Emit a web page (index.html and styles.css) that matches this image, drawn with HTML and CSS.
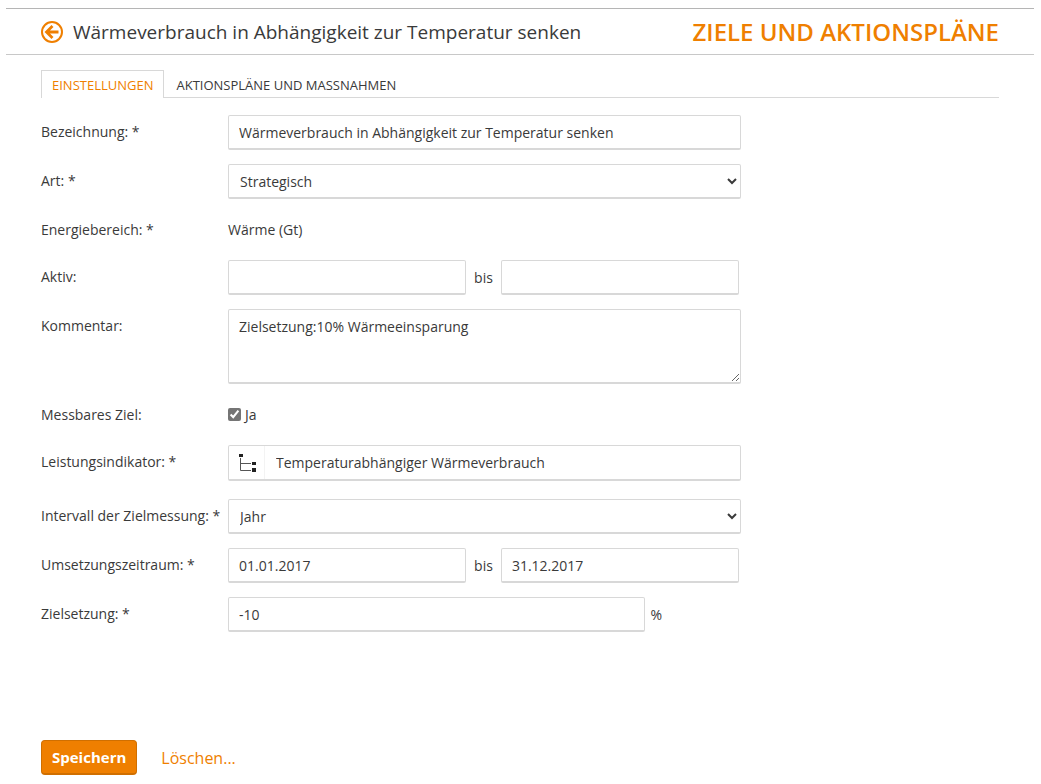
FILE: index.html
```html
<!DOCTYPE html>
<html lang="de">
<head>
<meta charset="utf-8">
<title>Ziele und Aktionspläne</title>
<link rel="stylesheet" href="styles.css">
</head>
<body>
<header class="page-header">
  <a class="back" href="#" aria-label="Zurück">
    <svg class="back-icon" viewBox="0 0 22 22" fill="none" stroke="currentColor">
      <circle cx="11" cy="11" r="10" stroke-width="2"/>
      <path d="M17.500 11H6M11.500 5L5.500 11l6 6" stroke-width="2.800"/>
    </svg>
  </a>
  <h1 class="title">Wärmeverbrauch in Abhängigkeit zur Temperatur senken</h1>
  <p class="section-name">ZIELE UND AKTIONSPLÄNE</p>
</header>
<main class="content">
  <nav class="tabs">
    <a class="tab tab-active" href="#" aria-current="page">EINSTELLUNGEN</a>
    <a class="tab" href="#">AKTIONSPLÄNE UND MASSNAHMEN</a>
  </nav>
  <form class="form">
    <label class="label" for="name">Bezeichnung: *</label>
    <input class="field" id="name" type="text" value="Wärmeverbrauch in Abhängigkeit zur Temperatur senken">

    <label class="label" for="kind">Art: *</label>
    <select class="field select" id="kind"><option>Strategisch</option></select>

    <span class="label">Energiebereich: *</span>
    <span class="static">Wärme (Gt)</span>

    <label class="label" for="active-from">Aktiv:</label>
    <div class="range">
      <input class="field" id="active-from" type="text">
      <label for="active-to">bis</label>
      <input class="field" id="active-to" type="text">
    </div>

    <label class="label" for="comment">Kommentar:</label>
    <textarea class="field comment" id="comment">Zielsetzung:10% Wärmeeinsparung</textarea>

    <span class="label">Messbares Ziel:</span>
    <div class="static check">
      <input class="checkbox" id="measurable" type="checkbox" checked>
      <label for="measurable">Ja</label>
    </div>

    <label class="label" for="indicator">Leistungsindikator: *</label>
    <div class="field picker">
      <button class="picker-button" type="button" aria-label="Indikator wählen">
        <svg class="tree-icon" viewBox="0 0 18 18">
          <path d="M2.500 4v12.500H13M2.500 9.500H13" fill="none" stroke="#555" stroke-width="1"/>
          <path d="M1 0h4v3H1zM14 8h4v3h-4zM14 14h4v4h-4z" fill="#222"/>
        </svg>
      </button>
      <input class="picker-input" id="indicator" type="text" value="Temperaturabhängiger Wärmeverbrauch">
    </div>

    <label class="label" for="interval">Intervall der Zielmessung: *</label>
    <select class="field select" id="interval"><option>Jahr</option></select>

    <label class="label" for="period-from">Umsetzungszeitraum: *</label>
    <div class="range">
      <input class="field" id="period-from" type="text" value="01.01.2017">
      <label for="period-to">bis</label>
      <input class="field" id="period-to" type="text" value="31.12.2017">
    </div>

    <label class="label" for="target">Zielsetzung: *</label>
    <div class="target">
      <input class="field" id="target" type="text" value="-10">
      <span>%</span>
    </div>

    <div class="actions">
      <button class="save" type="submit">Speichern</button>
      <a class="delete" href="#">Löschen...</a>
    </div>
  </form>
</main>
</body>
</html>
```
FILE: styles.css
```css
* { box-sizing: border-box; }

body {
  margin: 8px 7px 0 6px;
  background: #fff;
  color: #3a3a3a;
  font: 14px/20px "Open Sans", sans-serif;
}

a { color: #ef7f00; text-decoration: none; }

.page-header {
  display: flex;
  align-items: center;
  height: 47px;
  padding: 0 35px;
  border-top: 1px solid #b5b5b5;
  border-bottom: 1px solid #c8c8c8;
}

.back { display: flex; margin-right: 10px; }
.back-icon { width: 22px; height: 22px; }

.title { margin: 0; font-size: 19px; line-height: 28px; font-weight: 400; }

.section-name {
  margin: 0 0 0 auto;
  color: #ef7f00;
  font: 600 24px/32px "Open Sans", sans-serif;
  white-space: nowrap;
}

.content { padding: 15px 35px 0; }

.tabs { display: flex; border-bottom: 1px solid #d8d8d8; }

.tab {
  padding: 4px 11px 2px;
  border: 1px solid transparent;
  border-bottom: 0;
  color: #3a3a3a;
  font-size: 13px;
}

.tab-active {
  margin-bottom: -1px;
  padding: 4px 10px 3px;
  border-color: #d8d8d8;
  background: #fff;
  color: #ef7f00;
}

.form {
  display: grid;
  grid-template-columns: 187px minmax(0, 513px);
  row-gap: 14px;
  margin-top: 17px;
}

.label { padding-top: 7px; white-space: nowrap; }

.field {
  width: 100%;
  min-width: 0;
  height: 35px;
  padding: 0 10px;
  border: 1px solid #d8d8d8;
  border-bottom-width: 2px;
  border-radius: 2px;
  background: #fff;
  color: #3a3a3a;
  font: inherit;
}

.select { padding: 0 0 0 7px; }

.static { height: 33px; padding-top: 7px; }

.range {
  display: flex;
  align-items: center;
  gap: 8px;
  padding-right: 2px;
}

.range .field { flex: 1; }

.comment { display: block; height: 75px; padding: 7px 10px; resize: both; }

.check { display: flex; align-items: center; gap: 4px; padding: 0; }
.checkbox { width: 13px; height: 13px; margin: 0; accent-color: #757575; }

.picker { display: flex; height: 36px; margin-bottom: 4px; padding: 0; }

.picker-button {
  display: flex;
  align-items: center;
  justify-content: center;
  width: 36px;
  padding: 0;
  border: 0;
  border-right: 1px solid #f3f3f3;
  background: none;
}

.tree-icon { width: 18px; height: 18px; }

.picker-input {
  flex: 1;
  min-width: 0;
  padding: 0 11px;
  border: 0;
  background: none;
  color: inherit;
  font: inherit;
}

.target {
  display: flex;
  align-items: center;
  gap: 5px;
  padding-right: 79px;
}

.actions {
  display: flex;
  grid-column: 1 / -1;
  align-items: center;
  gap: 24px;
  margin-top: 94px;
}

.save {
  height: 35px;
  padding: 0 10px;
  border: 1px solid #d06f00;
  border-bottom-width: 2px;
  border-radius: 4px;
  background: #ef7f00;
  color: #fff;
  font: 700 15px/20px "Open Sans", sans-serif;
}

.delete { font-size: 16px; }
```
